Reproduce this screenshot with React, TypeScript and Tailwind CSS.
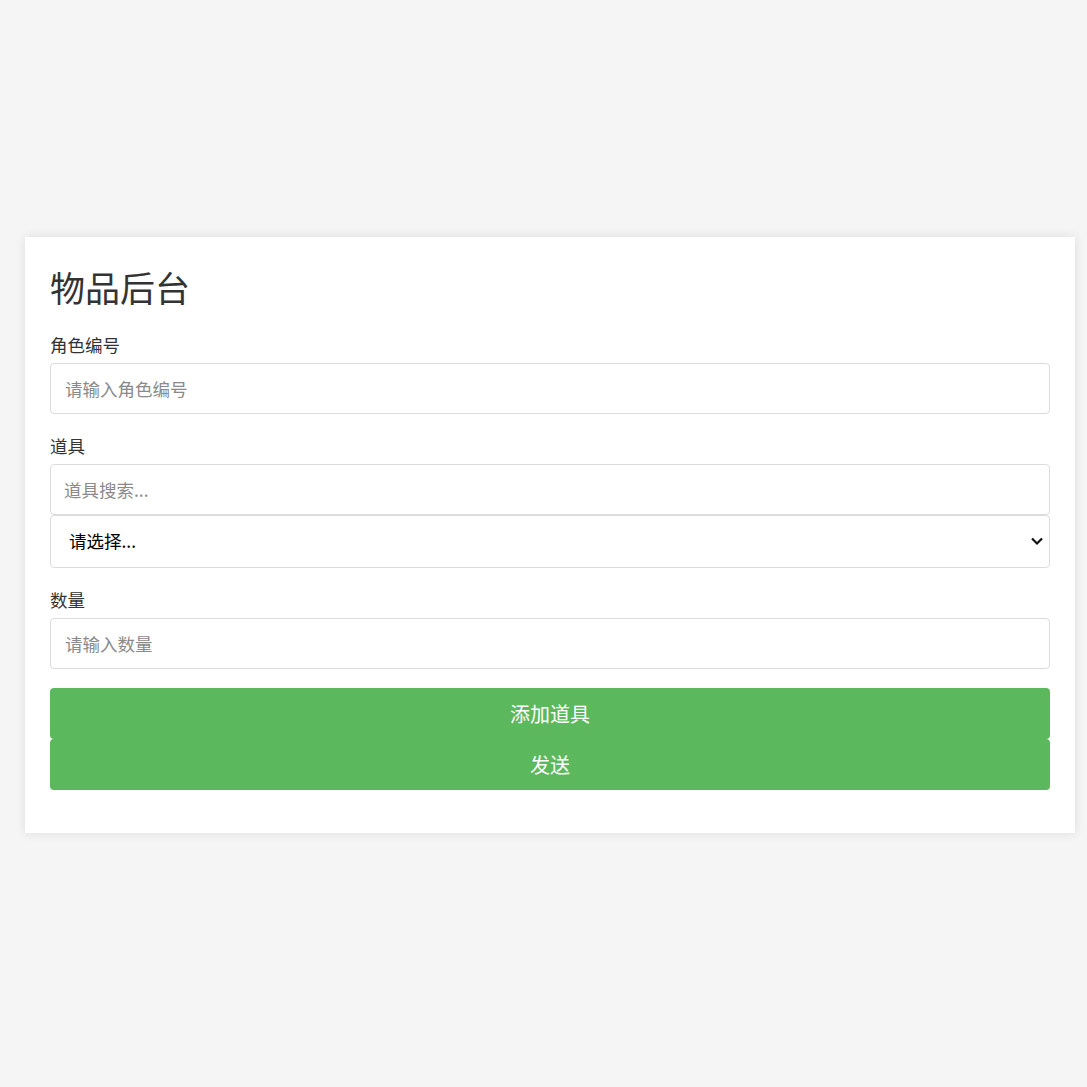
import React from "react";

export default function App() {
  const font = { fontFamily: '"Noto Sans CJK SC", "Noto Sans", sans-serif' };
  return (
    <div className="min-h-[1087px] w-full bg-[#f5f5f5] pt-[237px]" style={font}>
      <div className="ml-[25px] w-[1050px] bg-white px-[25px] pt-[25px] pb-[43px] shadow-[0_0_10px_rgba(0,0,0,0.1)]">
        <h1 className="h-[50px] text-[35px] leading-[50px] font-normal text-[#333]">物品后台</h1>
        <label className="mt-[22px] block text-[17.5px] leading-[22px] text-[#333]">角色编号</label>
        <input
          className="mt-[7px] block h-[51px] w-full rounded-[4px] border border-[#dcdcdc] px-[14px] text-[17.5px] text-[#333] outline-none placeholder:text-[#8a8a8a]"
          placeholder="请输入角色编号"
        />
        <label className="mt-[21px] block text-[17.5px] leading-[22px] text-[#333]">道具</label>
        <input
          className="mt-[7px] block h-[51px] w-full rounded-[4px] border border-[#dcdcdc] px-[13px] text-[17.5px] text-[#333] outline-none placeholder:text-[#8a8a8a]"
          placeholder="道具搜索..."
        />
        <div className="relative">
          <select
            className="block h-[53px] w-full appearance-none rounded-[4px] border border-[#dcdcdc] bg-white pl-[18px] text-[17.5px] text-black outline-none"
            defaultValue=""
            style={font}
          >
            <option value="">请选择...</option>
          </select>
          <svg
            className="pointer-events-none absolute right-[6px] top-[20px]"
            width="14"
            height="12"
            viewBox="0 0 14 12"
          >
            <path d="M2 3.5 L7 8.5 L12 3.5" fill="none" stroke="#111" strokeWidth="2.2" />
          </svg>
        </div>
        <label className="mt-[21px] block text-[17.5px] leading-[22px] text-[#333]">数量</label>
        <input
          className="mt-[7px] block h-[51px] w-full rounded-[4px] border border-[#dcdcdc] px-[14px] text-[17.5px] text-[#333] outline-none placeholder:text-[#8a8a8a]"
          placeholder="请输入数量"
        />
        <button className="mt-[19px] block h-[51px] w-full rounded-[4px] bg-[#5cb85c] text-[20px] text-white">
          添加道具
        </button>
        <button className="block h-[51px] w-full rounded-[4px] bg-[#5cb85c] text-[20px] text-white">
          发送
        </button>
      </div>
    </div>
  );
}
